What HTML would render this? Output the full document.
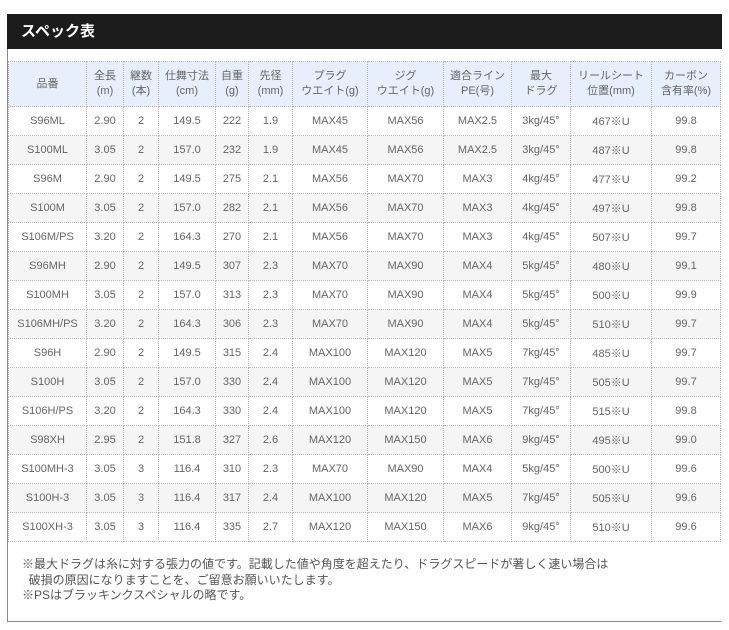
<!DOCTYPE html>
<html><head><meta charset="utf-8"><style>
body{margin:0;background:#fff;font-family:"Liberation Sans","Noto Sans CJK JP",sans-serif;}
.box{position:absolute;left:7px;top:14px;width:714px;height:608px;border-left:1px solid #888;border-bottom:1px solid #888;box-sizing:border-box;}
.hd{position:absolute;left:7px;top:14px;width:715px;height:35px;background:#1c1c1c;color:#fff;font-weight:bold;font-size:15px;line-height:35px;padding-left:14px;box-sizing:border-box;}
table{position:absolute;left:8px;top:61px;border-collapse:collapse;table-layout:fixed;width:712px;font-size:11px;color:#666;}
td,th{border:1px dotted #bbb;text-align:center;padding:0;font-weight:normal;}
th{background:#e6effb;height:44px;line-height:15px;}
td{height:28px;}
tr:nth-child(odd) td{background:#f5f5f5;}
.note{position:absolute;left:22px;top:557px;font-size:12px;color:#555;line-height:15.5px;}
</style></head><body>
<div class="box"></div>
<div class="hd">スペック表</div>
<table>
<colgroup><col style="width:78px"><col style="width:37px"><col style="width:35px"><col style="width:57px"><col style="width:33px"><col style="width:44px"><col style="width:75px"><col style="width:76px"><col style="width:68px"><col style="width:59px"><col style="width:81px"><col style="width:69px"></colgroup>
<tr><th>品番</th><th>全長<br>(m)</th><th>継数<br>(本)</th><th>仕舞寸法<br>(cm)</th><th>自重<br>(g)</th><th>先径<br>(mm)</th><th>プラグ<br>ウエイト(g)</th><th>ジグ<br>ウエイト(g)</th><th>適合ライン<br>PE(号)</th><th>最大<br>ドラグ</th><th>リールシート<br>位置(mm)</th><th>カーボン<br>含有率(%)</th></tr>
<tr><td>S96ML</td><td>2.90</td><td>2</td><td>149.5</td><td>222</td><td>1.9</td><td>MAX45</td><td>MAX56</td><td>MAX2.5</td><td>3kg/45°</td><td>467※U</td><td>99.8</td></tr>
<tr><td>S100ML</td><td>3.05</td><td>2</td><td>157.0</td><td>232</td><td>1.9</td><td>MAX45</td><td>MAX56</td><td>MAX2.5</td><td>3kg/45°</td><td>487※U</td><td>99.8</td></tr>
<tr><td>S96M</td><td>2.90</td><td>2</td><td>149.5</td><td>275</td><td>2.1</td><td>MAX56</td><td>MAX70</td><td>MAX3</td><td>4kg/45°</td><td>477※U</td><td>99.2</td></tr>
<tr><td>S100M</td><td>3.05</td><td>2</td><td>157.0</td><td>282</td><td>2.1</td><td>MAX56</td><td>MAX70</td><td>MAX3</td><td>4kg/45°</td><td>497※U</td><td>99.8</td></tr>
<tr><td>S106M/PS</td><td>3.20</td><td>2</td><td>164.3</td><td>270</td><td>2.1</td><td>MAX56</td><td>MAX70</td><td>MAX3</td><td>4kg/45°</td><td>507※U</td><td>99.7</td></tr>
<tr><td>S96MH</td><td>2.90</td><td>2</td><td>149.5</td><td>307</td><td>2.3</td><td>MAX70</td><td>MAX90</td><td>MAX4</td><td>5kg/45°</td><td>480※U</td><td>99.1</td></tr>
<tr><td>S100MH</td><td>3.05</td><td>2</td><td>157.0</td><td>313</td><td>2.3</td><td>MAX70</td><td>MAX90</td><td>MAX4</td><td>5kg/45°</td><td>500※U</td><td>99.9</td></tr>
<tr><td>S106MH/PS</td><td>3.20</td><td>2</td><td>164.3</td><td>306</td><td>2.3</td><td>MAX70</td><td>MAX90</td><td>MAX4</td><td>5kg/45°</td><td>510※U</td><td>99.7</td></tr>
<tr><td>S96H</td><td>2.90</td><td>2</td><td>149.5</td><td>315</td><td>2.4</td><td>MAX100</td><td>MAX120</td><td>MAX5</td><td>7kg/45°</td><td>485※U</td><td>99.7</td></tr>
<tr><td>S100H</td><td>3.05</td><td>2</td><td>157.0</td><td>330</td><td>2.4</td><td>MAX100</td><td>MAX120</td><td>MAX5</td><td>7kg/45°</td><td>505※U</td><td>99.7</td></tr>
<tr><td>S106H/PS</td><td>3.20</td><td>2</td><td>164.3</td><td>330</td><td>2.4</td><td>MAX100</td><td>MAX120</td><td>MAX5</td><td>7kg/45°</td><td>515※U</td><td>99.8</td></tr>
<tr><td>S98XH</td><td>2.95</td><td>2</td><td>151.8</td><td>327</td><td>2.6</td><td>MAX120</td><td>MAX150</td><td>MAX6</td><td>9kg/45°</td><td>495※U</td><td>99.0</td></tr>
<tr><td>S100MH-3</td><td>3.05</td><td>3</td><td>116.4</td><td>310</td><td>2.3</td><td>MAX70</td><td>MAX90</td><td>MAX4</td><td>5kg/45°</td><td>500※U</td><td>99.6</td></tr>
<tr><td>S100H-3</td><td>3.05</td><td>3</td><td>116.4</td><td>317</td><td>2.4</td><td>MAX100</td><td>MAX120</td><td>MAX5</td><td>7kg/45°</td><td>505※U</td><td>99.6</td></tr>
<tr><td>S100XH-3</td><td>3.05</td><td>3</td><td>116.4</td><td>335</td><td>2.7</td><td>MAX120</td><td>MAX150</td><td>MAX6</td><td>9kg/45°</td><td>510※U</td><td>99.6</td></tr>
</table>
<div class="note">※最大ドラグは糸に対する張力の値です。記載した値や角度を超えたり、ドラグスピードが著しく速い場合は<br>&nbsp;&nbsp;破損の原因になりますことを、ご留意お願いいたします。<br>※PSはブラッキンクスペシャルの略です。</div>
</body></html>
